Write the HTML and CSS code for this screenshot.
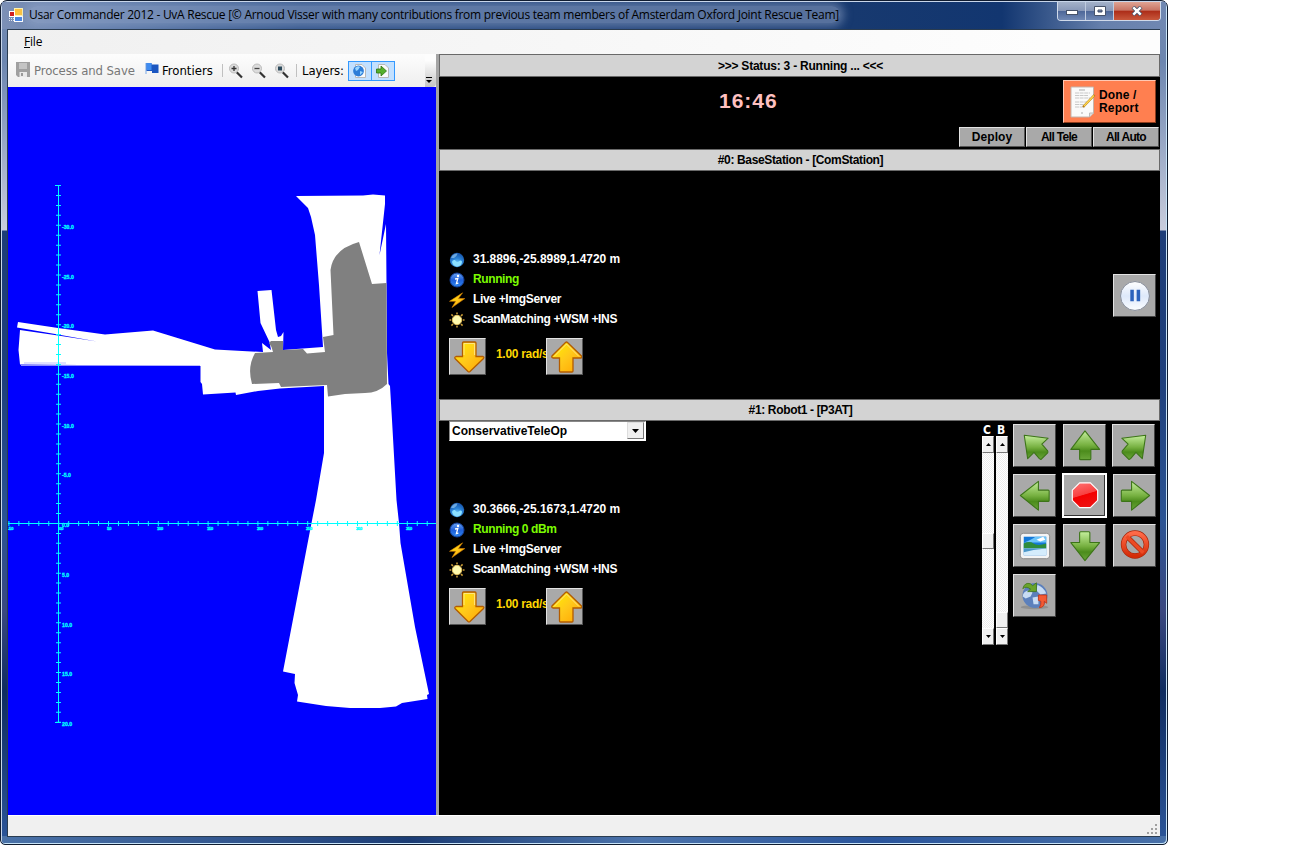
FILE: index.html
```html
<!DOCTYPE html>
<html lang="en">
<head>
<meta charset="utf-8">
<title>Usar Commander 2012</title>
<link rel="stylesheet" href="styles.css">
</head>
<body>
<svg class="defs" width="0" height="0">
  <defs>
    <linearGradient id="gGreen" x1="0" y1="0" x2="0" y2="1"><stop offset="0" stop-color="#c4ee9c"/><stop offset=".5" stop-color="#76b040"/><stop offset=".7" stop-color="#4c8c1c"/><stop offset="1" stop-color="#6aa63a"/></linearGradient>
    <linearGradient id="gGold" x1="0" y1="0" x2="1" y2="1"><stop offset="0" stop-color="#fff200"/><stop offset=".5" stop-color="#ffc81a"/><stop offset="1" stop-color="#ffa400"/></linearGradient>
    <radialGradient id="gBlue" cx=".5" cy=".75" r=".8"><stop offset="0" stop-color="#7ad8ff"/><stop offset=".45" stop-color="#2c84d8"/><stop offset="1" stop-color="#1048a0"/></radialGradient>
    <linearGradient id="gInfo" x1="0" y1="0" x2="0" y2="1"><stop offset="0" stop-color="#6aa4f4"/><stop offset=".5" stop-color="#1f5fd8"/><stop offset="1" stop-color="#2c86ee"/></linearGradient>
    <linearGradient id="gRed" x1="0" y1="0" x2="0" y2="1"><stop offset="0" stop-color="#ff6a48"/><stop offset="1" stop-color="#d42c08"/></linearGradient>
    <linearGradient id="gStop" x1="0" y1="0" x2=".3" y2="1"><stop offset="0" stop-color="#ff7474"/><stop offset=".55" stop-color="#f84040"/><stop offset=".58" stop-color="#f40000"/><stop offset="1" stop-color="#ee1010"/></linearGradient>
    <linearGradient id="gPause" x1="0" y1="0" x2="0" y2="1"><stop offset="0" stop-color="#ffffff"/><stop offset=".5" stop-color="#dde8fa"/><stop offset="1" stop-color="#fbfdff"/></linearGradient>
    <symbol id="earth" viewBox="0 0 16 16"><circle cx="8" cy="8" r="7.2" fill="url(#gBlue)"/><path d="M2 6Q4 1 8.500 1.500Q8 4.500 5 6Z" fill="#8cc4f0" opacity=".7"/><path d="M3 10Q3.500 7.500 6 8Q8 11.500 11 8.500Q13 8 13 10Q12.500 14 8 14.600Q4 14 3 10Z" fill="#8ce0ff"/></symbol>
    <symbol id="info" viewBox="0 0 16 16"><circle cx="8" cy="8" r="7" fill="url(#gInfo)" stroke="#16429c"/><circle cx="9" cy="4" r="1.200" fill="#fff"/><path d="M6 7L8.800 6.500L7.400 11.700L9.400 11.200" fill="none" stroke="#fff" stroke-width="1.300"/></symbol>
    <symbol id="bolt" viewBox="0 0 16 16"><path d="M13.600 .8L.5 9.300H6.700L3 15.500L15.800 6.600H9.400Z" fill="url(#gGold)" stroke="#d88000" stroke-width=".6"/></symbol>
    <symbol id="sun" viewBox="0 0 16 16"><g stroke="#c89b36" stroke-width="1.600"><path d="M8 .5V2.200M.5 8H2.200M2.400 2.400L4 4M13.600 2.400L12 4M8 13.800V15.500M13.800 8H15.500M12 12L13.600 13.600M4 12L2.400 13.600"/></g><circle cx="8" cy="8" r="4.700" fill="#fffbb0" stroke="#e9c55e"/></symbol>
    <symbol id="goldDown" viewBox="0 0 36 36"><path d="M12.500 5Q12.500 4 13.500 4H25Q26 4 26 5V18.500H33Q34.500 19 33.500 20.500L20 33.500Q19 34.300 18 33.500L5 20.500Q4.300 19 6 18.500H12.500Z" fill="url(#gGold)" stroke="#b35c00" stroke-width="1.300"/><path d="M14 17V5.500H24.600V17" fill="none" stroke="#ffe680"/></symbol>
    <symbol id="goldUp" viewBox="0 0 36 36"><path d="M12.500 33Q12.500 34 13.500 34H25Q26 34 26 33V20H34Q35.500 19.500 34.500 18L20.500 4.500Q19.500 3.600 18.500 4.500L5 18Q4.300 19.500 6 20H12.500Z" fill="url(#gGold)" stroke="#b35c00" stroke-width="1.300"/><path d="M7 18.500L19.500 6L32 18.500" fill="none" stroke="#ffe680"/></symbol>
    <symbol id="up" viewBox="0 0 42 42"><path d="M21.500 6L36.500 25H27.500V34.500Q27.500 35.500 26.500 35.500H17Q16 35.500 16 34.500V25H7Z" fill="url(#gGreen)" stroke="#3c7418" stroke-width="1.100" stroke-linejoin="round"/></symbol>
    <symbol id="down" viewBox="0 0 42 42"><path d="M21.500 36.500L36.500 18H26.500V8Q26.500 7 25.500 7H17Q16 7 16 8V18H7Z" fill="url(#gGreen)" stroke="#3c7418" stroke-width="1.100" stroke-linejoin="round"/></symbol>
    <symbol id="right" viewBox="0 0 42 42"><path d="M36.500 21L18 6.500V15.500H8.500Q7.500 15.500 7.500 16.500V26Q7.500 27 8.500 27H18V36Z" fill="url(#gGreen)" stroke="#3c7418" stroke-width="1.100" stroke-linejoin="round"/></symbol>
    <symbol id="left" viewBox="0 0 42 42"><path d="M6.500 21L25 6.500V15.500H35Q36 15.500 36 16.500V26Q36 27 35 27H25V36Z" fill="url(#gGreen)" stroke="#3c7418" stroke-width="1.100" stroke-linejoin="round"/></symbol>
    <symbol id="upLeft" viewBox="0 0 42 42"><path d="M10.500 10.500L35 13.500L28.500 19.500L34.500 26.500Q35 27.500 34.500 28.500L28 35Q27 35.500 26 34.500L20.500 28L14 34.500Z" fill="url(#gGreen)" stroke="#3c7418" stroke-width="1.100" stroke-linejoin="round"/></symbol>
    <symbol id="upRight" viewBox="0 0 42 42"><path d="M33.500 10.500L9 13.500L15.500 19.500L9.500 26.500Q9 27.500 9.500 28.500L16 35Q17 35.500 18 34.500L23.500 28L30 34.500Z" fill="url(#gGreen)" stroke="#3c7418" stroke-width="1.100" stroke-linejoin="round"/></symbol>
    <symbol id="lens" viewBox="0 0 16 16"><path d="M8.500 9L14 14.500" stroke="#333" stroke-width="2.200"/><circle cx="6" cy="5.500" r="4.500" fill="#dcdcdc" stroke="#bbb" stroke-width="1"/></symbol>
    <symbol id="sheet" viewBox="0 0 16 16"><path d="M3.500 1.500H10L13.500 5V14.500H3.500Z" fill="#fafafa" stroke="#b8b8b8"/></symbol>
  </defs>
</svg>

<div class="window">
  <header class="titlebar">
    <svg class="app-icon" viewBox="0 0 14 14"><rect x="5" width="9" height="8" fill="#fff4b0"/><rect x="6" y="1" width="7" height="6" fill="#ffc23a"/><rect y="3" width="6" height="6" fill="#fff"/><rect x="1" y="4" width="4" height="4" fill="#d02020"/><rect x="5" y="8" width="9" height="6" fill="#fff"/><rect x="6" y="9" width="7" height="4" fill="#4a86e0"/><path d="M0 10.500H5M0 12.500H5" stroke="#dfe6f2" stroke-dasharray="1 1"/></svg>
    <span class="title-text">Usar Commander 2012 - UvA Rescue [© Arnoud Visser with many contributions from previous team members of Amsterdam Oxford Joint Rescue Team]</span>
    <div class="caption-buttons">
      <span class="cap"><svg width="12" height="10"><rect x=".5" y="4.500" width="11" height="4" fill="#fff" stroke="#47536a"/></svg></span>
      <span class="cap"><svg width="12" height="10"><path fill-rule="evenodd" d="M.5 .5H11.500V9.500H.5ZM4 4V6H8V4Z" fill="#fff" stroke="#47536a"/></svg></span>
      <span class="cap cap-close"><svg width="12" height="10"><path d="M2 1L10 9M10 1L2 9" stroke="#47536a" stroke-width="4"/><path d="M2.300 1.300L9.700 8.700M9.700 1.300L2.300 8.700" stroke="#fff" stroke-width="2.400"/></svg></span>
    </div>
  </header>

  <div class="client">
    <nav class="menubar"><span class="menu-item"><u>F</u>ile</span></nav>
    <div class="workspace">
      <section class="map-pane">
        <div class="toolbar">
          <svg class="tb-save" viewBox="0 0 14 15"><path d="M0 0H14V15H2L0 13Z" fill="#a0a0a0"/><path d="M3 1H11V7H3Z" fill="#c4c4c4"/><path d="M3.500 10H11V15H3.500Z" fill="#e8e8e8"/><path d="M5 11H7V14H5Z" fill="#999"/></svg>
          <span class="tb-label tb-disabled">Process and Save</span>
          <svg class="tb-flag" viewBox="0 0 15 14"><path d="M1 1V12" stroke="#8cb4e8" stroke-width="1.200"/><path d="M1.500 1H6.500V2.500H13.500V11H7V9H1.500Z" fill="#1b56c0"/><path d="M1.500 1H6.500V8H1.500Z" fill="#3f8cf0"/></svg>
          <span class="tb-label tb-frontiers">Frontiers</span>
          <i class="tb-sep"></i>
          <svg class="tb-zoom" viewBox="0 0 16 16"><use href="#lens"/><path d="M3.500 5.500H8.500M6 3V8" stroke="#333" stroke-width="1.300"/></svg>
          <svg class="tb-zoom" viewBox="0 0 16 16"><use href="#lens"/><path d="M3.500 5.500H8.500" stroke="#444" stroke-width="1.300"/></svg>
          <svg class="tb-zoom" viewBox="0 0 16 16"><use href="#lens"/><rect x="4" y="3.500" width="4" height="4" fill="#2c4a5c"/></svg>
          <i class="tb-sep tb-sep-2"></i>
          <span class="tb-label tb-layers">Layers:</span>
          <span class="tb-toggle"><svg viewBox="0 0 16 16"><use href="#sheet"/><circle cx="6.500" cy="8" r="5.400" fill="#2b7cd8"/><path d="M3 5Q6 2 8 4L6 7L4 8ZM8 8L11 9L8 12Z" fill="#9ad6ff"/></svg></span>
          <span class="tb-toggle"><svg viewBox="0 0 16 16"><use href="#sheet"/><path d="M1.500 6H6V3L11.500 8L6 13V10H1.500Z" fill="#56b02c" stroke="#2c7410" stroke-width=".8"/></svg></span>
          <span class="tb-overflow"><svg width="6" height="7"><path d="M0 .5H6" stroke="#000"/><path d="M0 3H6L3 6Z"/></svg></span>
        </div>
        <svg class="map" viewBox="8 87 428 728">
          <g fill="#fff">
            <path d="M296 196L363 195.500L373 194.500L385 195.500V204L379.500 255L386 224L386.500 283L387 353L388.500 384L390 386L392 420L396.500 500L399 523L400.500 543L415 627L429 694L427 695L427.500 699L402 703L396 706.500L380 708H350L326 706L297 701.500L298 695L294.500 683L295 674L283 671.500L311.500 523L316 500L324 453V386L280 388.500L258 391L236 395L235.500 392.500L203 394.500L202 384L200.500 382V366L20 364.500L18.500 350L20 330L58 335.500L97 341.500L58 334.500L17 327.500L18 322L58 328L105 334.500L153 330.500L215 349.500L263 352L262 343L271 350L269.500 342L260.500 323L257.500 291L271.500 290L276 330L278 337L281 336L283.500 332L283 350L323 347L319 285L315 235L311 217L308 208Z"/>
          </g>
          <path d="M359 242L372 284L386.500 283L387 384Q378 393 365 393L345 394L328 396.500L327 385L281 387L279 383L252 384Q247 367 255 353L273 352L271.500 347L269 343L271 341H283V350L303 349L307 353.500L325 352L323 337L333.500 335L330.500 270Q333 249 359 242Z" fill="#808080"/>
          <path d="M21 365.500H200M24 363H66" stroke="#b0b0ff" stroke-width=".8"/>
          <g stroke="#00ffff" fill="none">
            <path d="M58.500 185V723M8 523.500H436"/>
            <path d="M58.500 185V723" stroke-width="5" stroke-dasharray="1 8.940"/>
            <path d="M8 523.500H436" stroke-width="5" stroke-dasharray="1 8.960" stroke-dashoffset="-.4"/>
            <path d="M55 185.500H61M55 722.500H61"/>
          </g>
          <g class="axis-text">
            <text x="62" y="229">-30.0</text><text x="62" y="279">-25.0</text><text x="62" y="328">-20.0</text><text x="62" y="378">-15.0</text><text x="62" y="428">-10.0</text><text x="62" y="477">-5.0</text><text x="62" y="527">0.0</text><text x="62" y="577">5.0</text><text x="62" y="627">10.0</text><text x="62" y="676">15.0</text><text x="62" y="726">20.0</text>
          </g>
          <g class="axis-text axis-x">
            <text x="8" y="530">-5.0</text><text x="59" y="530">0.0</text><text x="107" y="530">5.0</text><text x="157" y="530">10.0</text><text x="207" y="530">15.0</text><text x="257" y="530">20.0</text><text x="306" y="530">25.0</text><text x="356" y="530">30.0</text><text x="406" y="530">35.0</text>
          </g>
        </svg>
      </section>

      <section class="control-pane">
        <h2 class="band band-status">&gt;&gt;&gt; Status: 3 - Running ... &lt;&lt;&lt;</h2>
        <div class="mission">
          <span class="clock">16:46</span>
          <div class="mission-actions">
            <button class="done"><svg viewBox="0 0 26 32"><path d="M1 1H23.500V27L19.500 31H1Z" fill="#fafafa" stroke="#c4b4ac"/><path d="M5 7H20M5 9.500H18M5 12H20M5 16H19M5 18.500H17M5 21H15" stroke="#c8c8c8" stroke-dasharray="4 .6"/><path d="M9 4H15M11 27H13" stroke="#aaa"/><path d="M24.500 9L13 21" stroke="#b07818" stroke-width="2.200"/><path d="M24 9.500L14 20" stroke="#ffd84e" stroke-width="1.400"/><path d="M19.500 31V27H23.500" fill="#ddd" stroke="#bbb"/></svg><span>Done /<br>Report</span></button>
            <div class="fleet"><button class="deploy">Deploy</button><button>All Tele</button><button>All Auto</button></div>
          </div>
        </div>

        <h2 class="band">#0: BaseStation - [ComStation]</h2>
        <div class="unit unit-base">
          <div class="info">
            <ul class="facts">
              <li class="pos"><svg><use href="#earth"/></svg><span>31.8896,-25.8989,1.4720 m</span></li>
              <li class="ok"><svg><use href="#info"/></svg><span>Running</span></li>
              <li><svg><use href="#bolt"/></svg><span>Live +ImgServer</span></li>
              <li><svg><use href="#sun"/></svg><span>ScanMatching +WSM +INS</span></li>
            </ul>
            <div class="speed"><button><svg><use href="#goldDown"/></svg></button><span>1.00 rad/s</span><button><svg><use href="#goldUp"/></svg></button></div>
          </div>
          <button class="key pause"><svg viewBox="0 0 42 42"><circle cx="21.500" cy="21.500" r="14.800" fill="url(#gPause)" stroke="#858b98"/><path d="M18.500 15V27M25 15V27" stroke="#2a62bc" stroke-width="3.600"/></svg></button>
        </div>

        <h2 class="band">#1: Robot1 - [P3AT]</h2>
        <div class="unit">
          <div class="info">
            <div class="combo"><span>ConservativeTeleOp</span><i><svg width="7" height="4"><path d="M0 0H7L3.500 4Z"/></svg></i></div>
            <ul class="facts">
              <li class="pos"><svg><use href="#earth"/></svg><span>30.3666,-25.1673,1.4720 m</span></li>
              <li class="ok"><svg><use href="#info"/></svg><span>Running 0 dBm</span></li>
              <li><svg><use href="#bolt"/></svg><span>Live +ImgServer</span></li>
              <li><svg><use href="#sun"/></svg><span>ScanMatching +WSM +INS</span></li>
            </ul>
            <div class="speed"><button><svg><use href="#goldDown"/></svg></button><span>1.00 rad/s</span><button><svg><use href="#goldUp"/></svg></button></div>
          </div>
          <div class="drive">
            <div class="slider"><b>C</b><div class="track"><i class="cell"><svg width="5" height="3"><path d="M0 3H5L2.500 0Z"/></svg></i><i class="gap-a"></i><i class="cell thumb"></i><i class="grow"></i><i class="cell"><svg width="5" height="3"><path d="M0 0H5L2.500 3Z"/></svg></i></div></div>
            <div class="slider"><b>B</b><div class="track"><i class="cell"><svg width="5" height="3"><path d="M0 3H5L2.500 0Z"/></svg></i><i class="grow"></i><i class="cell thumb"></i><i class="cell"><svg width="5" height="3"><path d="M0 0H5L2.500 3Z"/></svg></i></div></div>
            <div class="pad">
              <button class="key"><svg><use href="#upLeft"/></svg></button>
              <button class="key"><svg><use href="#up"/></svg></button>
              <button class="key key-corner"><svg><use href="#upRight"/></svg></button>
              <button class="key"><svg><use href="#left"/></svg></button>
              <button class="key focus"><svg viewBox="0 0 42 42"><path d="M16 8H27L34.500 15.500V26L27 33.500H16L8.500 26V15.500Z" fill="url(#gStop)" stroke="#fff" stroke-width="1.200"/></svg></button>
              <button class="key"><svg><use href="#right"/></svg></button>
              <button class="key"><svg viewBox="0 0 42 42"><rect x="6.500" y="8.500" width="30" height="26" rx="3" fill="#f4f4f4" stroke="#8c8c8c"/><rect x="10" y="12" width="23" height="19" fill="#1478d8"/><path d="M10 18Q18 15 22 12H33V18Z" fill="#6cc4f8"/><path d="M23 15L30 12L32 15L27 17Z" fill="#fff"/><path d="M10 19Q16 16 20 19T33 19V24H10Z" fill="#2e8c3c"/><path d="M10 24H33V31H10Z" fill="#d4ecfc"/><path d="M10 24H33L20 25.500L10 28Z" fill="#4a96c8"/></svg></button>
              <button class="key"><svg><use href="#down"/></svg></button>
              <button class="key"><svg viewBox="0 0 42 42"><circle cx="21.500" cy="20" r="11.700" fill="none" stroke="#a82408" stroke-width="5.600"/><path d="M13.500 12L29.500 28" stroke="#a82408" stroke-width="5"/><circle cx="21.500" cy="20" r="11.700" fill="none" stroke="url(#gRed)" stroke-width="4.200"/><path d="M13 11.500L30 28.500" stroke="#ec4a24" stroke-width="3.600"/></svg></button>
              <button class="key"><svg viewBox="0 0 42 42"><ellipse cx="21" cy="33" rx="14" ry="2" fill="#777" opacity=".5"/><circle cx="21.500" cy="21" r="12.800" fill="#5c80bc"/><path d="M9 22Q9 17 15 16L19 18L17 22L12 24ZM24 10Q31 13 33 19L27 20L23 16ZM19 23L25 22L25 30L20 30Z" fill="#c8dcf4"/><path d="M9 14Q11 7 17 9L19 11L23 8V17H14L17 14.500Q12 11 9 14Z" fill="#6aa42c" stroke="#3c7418" stroke-width=".8"/><path d="M25 20.500H33.500V29L31 27Q32 33 26 33.500Q28 30 27.500 27L25 26Z" fill="#f45a34" stroke="#c03010" stroke-width=".8"/></svg></button>
            </div>
          </div>
        </div>
      </section>
    </div>
    <footer class="statusbar"><svg width="11" height="11"><g fill="#a0a0a0"><path d="M8 0h2v2h-2zM8 4h2v2h-2zM4 4h2v2h-2zM8 8h2v2h-2zM4 8h2v2h-2zM0 8h2v2h-2z"/></g></svg></footer>
  </div>
</div>
</body>
</html>
```
FILE: styles.css
```css
* { box-sizing: border-box; }
body { margin: 0; background: #fff; overflow: hidden; font-family: "Liberation Sans", Arial, sans-serif; }
.defs { position: absolute; }
button { font: inherit; margin: 0; padding: 0; color: #000; border-radius: 0; }
svg { display: block; flex: none; }

.window {
  width: 1168px; height: 845px; display: flex; flex-direction: column;
  padding: 0 7px 7px 6px; border: 1px solid #101c30; border-radius: 7px 7px 5px 5px;
  box-shadow: inset 1px 1px 0 #c8d6ea, inset -1px -1px 0 #c8e4f8;
  background:
    linear-gradient(90deg, #4a72a8, #2c4f88 25%, #1b3c74 35%, #4c74ac 55%, #2a559c 75%, #4870a8) 0 100% / 100% 8px no-repeat,
    linear-gradient(180deg, #7289b1 0, #6c86b0 60px, #c8ccdc 229px, #1d3d78 230px, #1f407c 380px, #2b5494 520px, #3a4880 610px, #0f2c60 690px, #2c569a 844px);
}
.titlebar {
  height: 27px; flex: none; display: flex; align-items: flex-start; margin: 1px -6px 0 -5px; padding-left: 8px; overflow: hidden;
  background: linear-gradient(90deg, #7c90b6 0, #5f7cab 100px, #2c5088 300px, #17396f 850px, #123670 1000px, #6680ac 1100px, #7088b2 100%);
}
.app-icon { width: 14px; height: 14px; margin: 6px 0 0 -1px; }
.title-text {
  width: 811px; margin: 4px auto 0 6px; font: 12px/17px "Open Sans", sans-serif; letter-spacing: -.27px; white-space: nowrap; color: #000;
  background: rgba(150, 168, 202, .5); border-radius: 8px; box-shadow: 0 0 8px 4px rgba(150, 168, 202, .5);
}
.caption-buttons { display: flex; width: 104px; height: 19px; margin-right: 5px; border: 1px solid #d0daea; border-top: 0; border-radius: 0 0 4px 4px; overflow: hidden; background: #5a78a8; }
.cap { width: 28px; display: flex; align-items: center; justify-content: center; border-right: 1px solid #c0cce0; background: linear-gradient(#a4b2ca 0, #8898b8 48%, #4c6698 50%, #7088b4 100%); }
.cap-close { flex: 1; border: 0; background: linear-gradient(#dfa494 0, #c87464 46%, #ac2c18 50%, #c8583c 100%); }

.client { flex: 1; min-height: 0; display: flex; flex-direction: column; border: 1px solid #2a3c50; border-width: 1px 0 1px 1px; width: 1153px; }
.menubar { height: 24px; flex: none; padding: 3px 0 0 16px; font: 12px/17px "Open Sans", sans-serif; background: linear-gradient(90deg, #f0f0f0, #fdfdfd 90%); letter-spacing: -.2px; }
.workspace { height: 761px; flex: none; display: flex; }
.map-pane { width: 431px; border-right: 3px solid #a4a4a4; display: flex; flex-direction: column; }
.toolbar { height: 33px; flex: none; display: flex; align-items: center; background: linear-gradient(#fdfdfd, #eee); padding-left: 8px; position: relative; font: 13px/16px "DejaVu Sans Condensed", "DejaVu Sans", sans-serif; }
.tb-save { width: 14px; height: 15px; margin-top: -2px; }
.tb-label { white-space: nowrap; letter-spacing: -.1px; }
.tb-disabled { color: #777; margin-left: 4px; width: 101px; }
.tb-flag { width: 15px; height: 14px; margin: -3px 0 0 10px; }
.tb-frontiers { margin-left: 2px; width: 52px; letter-spacing: 0; }
.tb-sep { width: 1px; height: 13px; background: #c0c0c0; margin: 0 5px 0 8px; }
.tb-zoom { width: 16px; height: 16px; margin-right: 7px; }
.tb-sep-2 { margin: 0 5px 0 -1px; }
.tb-layers { width: 42px; margin-right: 4px; }
.tb-toggle { width: 24px; height: 20px; padding: 1px 3px; border: 1px solid #3399ff; background: #c2e0ff; margin-right: -1px; }
.tb-toggle svg { width: 16px; height: 16px; }
.tb-overflow { position: absolute; right: 0; bottom: 0; width: 11px; height: 33px; padding: 23px 0 0 1px; background: linear-gradient(#fdfdfd 20%, #c4c4c4); border-radius: 0 0 4px 0; }
.map { width: 428px; height: 728px; background: #00f; }
.axis-text { font: bold 5.2px "Liberation Sans", sans-serif; fill: #0ff; stroke: #0ff; stroke-width: .3px; }
.axis-x { font-size: 4px; letter-spacing: -.5px; }

.control-pane { width: 722px; background: #000; display: flex; flex-direction: column; }
.band { height: 22px; flex: none; margin: 0; padding-left: 2px; border: 1px solid #696969; background: #d3d3d3; text-align: center; font: bold 12px/20px "Liberation Sans", sans-serif; letter-spacing: -.35px; color: #000; }
.band-status { height: 23px; line-height: 22px; letter-spacing: -.22px; }
.mission { height: 72px; flex: none; display: flex; justify-content: flex-end; }
.clock { width: 74px; margin: 10px 166px 0 0; font: bold 21px/28px "Liberation Sans", sans-serif; letter-spacing: 1px; color: #ffc0c0; }
.mission-actions { width: 201px; display: flex; flex-direction: column; align-items: flex-end; padding: 3px 1px 0 0; }
.done { width: 93px; height: 43px; margin-right: 3px; display: flex; align-items: center; padding-left: 6px; gap: 3px; background: #ff7f50; border: 1px solid; border-color: #ffc8b4 #8c3c1c #8c3c1c #ffc8b4; font: bold 12px/13px "Liberation Sans", sans-serif; text-align: left; letter-spacing: .15px; }
.done svg { width: 26px; height: 32px; }
.fleet { display: flex; gap: 1px; margin-top: 4px; }
.fleet button, .speed button, .key { background: #a9a9a9; border: 1px solid; border-color: #e3e3e3 #555 #555 #e3e3e3; }
.fleet button { width: 66px; height: 20px; font: bold 12px/18px "Liberation Sans", sans-serif; letter-spacing: -.7px; }
.fleet .deploy { letter-spacing: .1px; }

.unit { flex: 1; display: flex; justify-content: space-between; padding: 0 4px 0 10px; }
.unit-base { flex: none; height: 228px; }
.info { width: 200px; display: flex; flex-direction: column; }
.unit-base .info { padding-top: 20px; }
.combo { width: 197px; height: 20px; display: flex; justify-content: space-between; background: #fff; border: 1px solid #888; border-color: #888 #fff #fff #888; font: bold 12px/18px "Liberation Sans", sans-serif; padding: 0 1px 0 2px; }
.combo i { width: 17px; height: 17px; display: flex; align-items: center; justify-content: center; background: #f0f0f0; border: 1px solid; border-color: #ddd #777 #777 #ddd; }
.facts { list-style: none; padding: 0; margin: 58px 0 9px; color: #fff; font: bold 12px/20px "Liberation Sans", sans-serif; }
.facts li { display: flex; align-items: center; height: 20px; gap: 8px; white-space: nowrap; letter-spacing: -.33px; }
.facts .pos { letter-spacing: -.04px; }
.facts svg { width: 16px; height: 16px; margin-top: 1px; }
.facts .ok { color: #7cfc00; letter-spacing: -.4px; }
.speed { display: flex; }
.speed button { width: 37px; height: 37px; flex: none; overflow: hidden; }
.speed svg { width: 36px; height: 36px; margin: -1px 0 0 0; }
.speed span { width: 60px; padding: 6px 0 0 10px; white-space: nowrap; font: bold 12px/20px "Liberation Sans", sans-serif; color: #ffd700; letter-spacing: -.3px; }
.key { width: 43px; height: 43px; padding: 0; display: block; border-right-color: #444; border-bottom-color: #444; }
.key svg { width: 41px; height: 41px; }
.key-corner { margin-left: -1px; }
.pause { margin-top: 103px; }
.focus { border-color: #fff; outline: 1px solid #fff; box-shadow: inset -1px -1px 0 #333; }
.drive { display: flex; align-items: flex-start; }
.slider { width: 14px; padding-top: 2px; font: bold 12px/15px "DejaVu Sans Condensed", sans-serif; color: #fff; }
.slider b { display: block; width: 10px; height: 13px; text-align: center; }
.track { width: 12px; height: 209px; display: flex; flex-direction: column; background: repeating-conic-gradient(#fff 0 25%, #ececec 0 50%) 0 0 / 2px 2px; }
.cell { flex: none; height: 17px; display: flex; align-items: center; justify-content: center; background: #f0f0f0; border: 1px solid; border-color: #fff #777 #777 #fff; }
.thumb { height: 16px; }
.gap-a { height: 80px; }
.grow { flex: 1; }
.pad { display: grid; grid-template-columns: repeat(3, 43px); gap: 7px; margin: 3px 0 0 3px; }

.statusbar { flex: 1; background: #f0f0f0; border-top: 1px solid #fff; display: flex; justify-content: flex-end; align-items: flex-end; padding: 0 2px 1px 0; }
```
